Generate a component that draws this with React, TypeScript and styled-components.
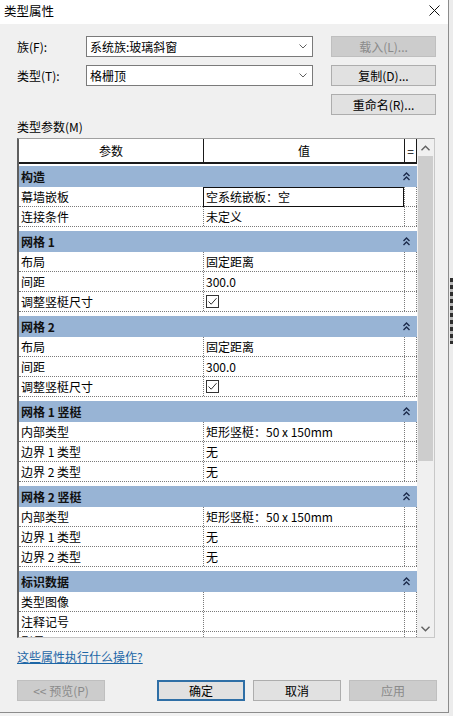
import React from 'react'
import styled, { createGlobalStyle, css } from 'styled-components'

const GlobalStyle = createGlobalStyle`
  html, body {
    margin: 0;
    padding: 0;
    background: #f2f2f2;
  }
  body {
    font-family: "Noto Sans CJK SC", "Noto Sans", sans-serif;
    font-size: 12px;
    color: #000;
  }
  * {
    box-sizing: border-box;
  }
`

type Row = { name: string; value?: string; check?: boolean; focused?: boolean }
type Section = { title: string; rows: Row[] }

const gridRows: Row[] = [
  { name: '布局', value: '固定距离' },
  { name: '间距', value: '300.0' },
  { name: '调整竖梃尺寸', check: true },
]

const mullionRows: Row[] = [
  { name: '内部类型', value: '矩形竖梃：50 x 150mm' },
  { name: '边界 1 类型', value: '无' },
  { name: '边界 2 类型', value: '无' },
]

const sections: Section[] = [
  {
    title: '构造',
    rows: [
      { name: '幕墙嵌板', value: '空系统嵌板：空', focused: true },
      { name: '连接条件', value: '未定义' },
    ],
  },
  { title: '网格 1', rows: gridRows },
  { title: '网格 2', rows: gridRows },
  { title: '网格 1 竖梃', rows: mullionRows },
  { title: '网格 2 竖梃', rows: mullionRows },
  { title: '标识数据', rows: [{ name: '类型图像' }, { name: '注释记号' }, { name: '型号' }] },
]

const CloseIcon = () => (
  <svg width="11" height="11" viewBox="0 0 11 11">
    <path d="M0.5 0.5 L10.5 10.5 M10.5 0.5 L0.5 10.5" stroke="#111" strokeWidth="1" fill="none" />
  </svg>
)

const ComboArrow = () => (
  <svg width="8" height="5" viewBox="0 0 8 5">
    <polyline points="0.5,0.5 4,4 7.5,0.5" stroke="#606060" strokeWidth="1" fill="none" />
  </svg>
)

const CollapseIcon = () => (
  <svg width="7" height="9" viewBox="0 0 7 9">
    <polyline points="0.5,4 3.5,1 6.5,4" stroke="#1b2a4a" strokeWidth="1.4" fill="none" />
    <polyline points="0.5,8 3.5,5 6.5,8" stroke="#1b2a4a" strokeWidth="1.4" fill="none" />
  </svg>
)

const ScrollArrow = ({ down }: { down?: boolean }) => (
  <svg width="9" height="6" viewBox="0 0 9 6">
    <polyline
      points={down ? '0.5,0.8 4.5,4.8 8.5,0.8' : '0.5,5.2 4.5,1.2 8.5,5.2'}
      stroke="#606060"
      strokeWidth="1.4"
      fill="none"
    />
  </svg>
)

const CheckBox = () => (
  <svg width="13" height="13" viewBox="0 0 13 13">
    <rect x="0.5" y="0.5" width="12" height="12" fill="#fff" stroke="#333" strokeWidth="1" />
    <polyline points="2.5,6.5 5.2,9.2 10.5,3.2" stroke="#333" strokeWidth="1" fill="none" />
  </svg>
)

export default function App() {
  return (
    <>
      <GlobalStyle />
      <Screen>
        <Dialog>
          <TitleBar>
            <Title>类型属性</Title>
            <CloseButton>
              <CloseIcon />
            </CloseButton>
          </TitleBar>

          <Form>
            <FieldLabel>族(F):</FieldLabel>
            <Combo>
              <span>系统族:玻璃斜窗</span>
              <ComboArrow />
            </Combo>
            <Button $variant="disabled" $wide>
              载入(L)...
            </Button>

            <FieldLabel>类型(T):</FieldLabel>
            <Combo>
              <span>格栅顶</span>
              <ComboArrow />
            </Combo>
            <Button $wide>复制(D)...</Button>

            <Button $wide $col={3}>
              重命名(R)...
            </Button>
          </Form>

          <ParamsLabel>类型参数(M)</ParamsLabel>

          <Table>
            <Grid>
              <HeaderRow>
                <HeaderCell>参数</HeaderCell>
                <HeaderCell $divider>值</HeaderCell>
                <HeaderCell $divider $last>
                  =
                </HeaderCell>
              </HeaderRow>

              {sections.map((section, i) => (
                <React.Fragment key={i}>
                  <SectionBand $first={i === 0}>
                    <span>{section.title}</span>
                    <CollapseIcon />
                  </SectionBand>
                  {section.rows.map((row, j) => (
                    <DataRow key={j}>
                      <NameCell>{row.name}</NameCell>
                      <ValueCell $focused={row.focused}>
                        {row.check ? <CheckBox /> : row.value}
                      </ValueCell>
                      <EqCell />
                    </DataRow>
                  ))}
                </React.Fragment>
              ))}
            </Grid>

            <ScrollBar>
              <ScrollButton>
                <ScrollArrow />
              </ScrollButton>
              <ScrollThumb />
              <ScrollTrack />
              <ScrollButton>
                <ScrollArrow down />
              </ScrollButton>
            </ScrollBar>
          </Table>

          <HelpLink>这些属性执行什么操作?</HelpLink>

          <Footer>
            <Button $variant="disabled" $gapAfter>
              {'<< 预览(P)'}
            </Button>
            <Button $variant="primary">确定</Button>
            <Button>取消</Button>
            <Button $variant="disabled">应用</Button>
          </Footer>
        </Dialog>

        <SideStrip>
          <BackgroundBits />
        </SideStrip>
      </Screen>
    </>
  )
}

const Screen = styled.div`
  display: flex;
  width: 453px;
  height: 716px;
  overflow: hidden;
`

const Dialog = styled.div`
  width: 449px;
  height: 713px;
  flex-shrink: 0;
  background: #f0f0f0;
  border-right: 1px solid #8c8c8c;
  border-bottom: 1px solid #8c8c8c;
  display: flex;
  flex-direction: column;
`

const TitleBar = styled.div`
  height: 24px;
  background: #fff;
  display: flex;
  align-items: center;
  justify-content: space-between;
  padding: 0 8px 3px 4px;
`

const Title = styled.div`
  font-size: 12.5px;
  line-height: 16px;
`

const CloseButton = styled.div`
  display: flex;
  align-items: center;
`

const Form = styled.div`
  display: grid;
  grid-template-columns: 69px 245px 105px;
  grid-auto-rows: 21px;
  row-gap: 8px;
  padding: 12px 0 0 17px;
`

const FieldLabel = styled.div`
  align-self: center;
  line-height: 16px;
`

const Combo = styled.div`
  width: 227px;
  background: #fff;
  border: 1px solid #7a7a7a;
  display: flex;
  align-items: center;
  justify-content: space-between;
  padding: 0 5px 0 3px;
  line-height: 16px;
`

const Button = styled.div<{
  $variant?: 'default' | 'primary' | 'disabled'
  $wide?: boolean
  $col?: number
  $gapAfter?: boolean
}>`
  width: ${(p) => (p.$wide ? 105 : 88)}px;
  height: 21px;
  display: flex;
  align-items: center;
  justify-content: center;
  background: #e1e1e1;
  border: 1px solid #adadad;
  line-height: 16px;
  ${(p) => p.$col && `grid-column: ${p.$col};`}
  ${(p) => p.$gapAfter && 'margin-right: 44px;'}
  ${(p) =>
    p.$variant === 'primary' &&
    css`
      border-color: #2f6fa6;
      box-shadow: inset 0 0 0 1px #2f6fa6;
    `}
  ${(p) =>
    p.$variant === 'disabled' &&
    css`
      background: #cccccc;
      border-color: #bfbfbf;
      color: #8a8a8a;
    `}
`

const ParamsLabel = styled.div`
  margin-top: 4px;
  padding-left: 17px;
  line-height: 16px;
  height: 16px;
`

const Table = styled.div`
  margin: 3px 0 0 17px;
  width: 418px;
  height: 500px;
  flex-shrink: 0;
  background: #fff;
  border-left: 2px solid #5f5f5f;
  border-top: 1px solid #a0a0a0;
  border-right: 1px solid #c8c8c8;
  border-bottom: 1px solid #c8c8c8;
  display: flex;
  overflow: hidden;
`

const Grid = styled.div`
  width: 398px;
  flex-shrink: 0;
  display: flex;
  flex-direction: column;
  overflow: hidden;
`

const columns = css`
  display: grid;
  grid-template-columns: 184px 201px 13px;
`

const HeaderRow = styled.div`
  ${columns};
  height: 25px;
  flex-shrink: 0;
  border-bottom: 2px solid #1a1a1a;
`

const HeaderCell = styled.div<{ $divider?: boolean; $last?: boolean }>`
  display: flex;
  align-items: center;
  justify-content: center;
  line-height: 16px;
  ${(p) => p.$divider && 'border-left: 1px solid #1a1a1a;'}
  ${(p) => p.$last && 'border-right: 1px solid #1a1a1a;'}
`

const SectionBand = styled.div<{ $first?: boolean }>`
  flex-shrink: 0;
  height: 21px;
  margin-top: ${(p) => (p.$first ? 2 : 4)}px;
  background: #98b4d5;
  display: flex;
  align-items: center;
  justify-content: space-between;
  padding: 0 7px 0 2px;
  font-weight: bold;
  color: #111;
  line-height: 16px;
`

const DataRow = styled.div`
  ${columns};
  flex-shrink: 0;
  height: 20px;
  border-bottom: 1px dotted #7a7a7a;
  line-height: 16px;
`

const NameCell = styled.div`
  display: flex;
  align-items: center;
  padding-left: 2px;
  white-space: nowrap;
`

const ValueCell = styled.div<{ $focused?: boolean }>`
  display: flex;
  align-items: center;
  padding-left: 2px;
  white-space: nowrap;
  border-left: 1px dotted #7a7a7a;
  ${(p) =>
    p.$focused &&
    css`
      border: 1px solid #111;
      margin-bottom: -1px;
      position: relative;
      padding-left: 2px;
    `}
`

const EqCell = styled.div`
  border-left: 1px dotted #7a7a7a;
  border-right: 1px dotted #7a7a7a;
`

const ScrollBar = styled.div`
  width: 17px;
  flex-shrink: 0;
  background: #f0f0f0;
  display: flex;
  flex-direction: column;
`

const ScrollButton = styled.div`
  height: 17px;
  flex-shrink: 0;
  display: flex;
  align-items: center;
  justify-content: center;
`

const ScrollThumb = styled.div`
  height: 305px;
  flex-shrink: 0;
  margin: 0 1px;
  background: #cdcdcd;
`

const ScrollTrack = styled.div`
  flex: 1;
`

const HelpLink = styled.div`
  margin-top: 11px;
  padding-left: 17px;
  line-height: 16px;
  color: #1c66a6;
  text-decoration: underline;
`

const Footer = styled.div`
  display: flex;
  gap: 8px;
  margin-top: 15px;
  padding-left: 17px;
`

const SideStrip = styled.div`
  flex: 1;
  display: flex;
  flex-direction: column;
  align-items: flex-end;
  background: #ececec;
`

const BackgroundBits = styled.div`
  margin-top: 278px;
  width: 3px;
  height: 66px;
  background: repeating-linear-gradient(to bottom, #2e2e2e 0 4px, #b8b8b8 4px 7px);
`
